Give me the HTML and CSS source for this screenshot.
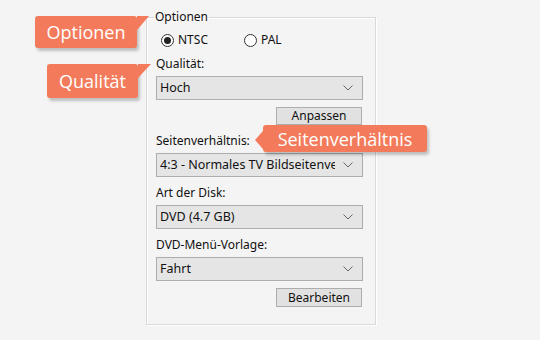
FILE: index.html
```html
<!DOCTYPE html>
<html>
	<head>
		<meta charset="utf-8"/>
		<meta name="viewport" content="width=device-width"/>
		<link rel="stylesheet" href="styles.css">
	</head>
	<body>
		<div class="stage">
			<fieldset class="group">
				<legend>Optionen</legend>
				<div class="radios">
					<div class="radio checked"><span class="dot"></span>NTSC</div>
					<div class="radio"><span class="dot"></span>PAL</div>
				</div>
				<div class="label">Qualität:</div>
				<div class="select"><span class="clip">Hoch</span><svg class="arrow" width="10" height="6" viewBox="0 0 10 6"><polyline points="0.5,0.5 5,5 9.5,0.5"/></svg></div>
				<div class="btnrow"><div class="btn">Anpassen</div></div>
				<div class="label">Seitenverhältnis:</div>
				<div class="select"><span class="clip">4:3 - Normales TV Bildseitenverhältnis</span><svg class="arrow" width="10" height="6" viewBox="0 0 10 6"><polyline points="0.5,0.5 5,5 9.5,0.5"/></svg></div>
				<div class="label">Art der Disk:</div>
				<div class="select"><span class="clip">DVD (4.7 GB)</span><svg class="arrow" width="10" height="6" viewBox="0 0 10 6"><polyline points="0.5,0.5 5,5 9.5,0.5"/></svg></div>
				<div class="label">DVD-Menü-Vorlage:</div>
				<div class="select"><span class="clip">Fahrt</span><svg class="arrow" width="10" height="6" viewBox="0 0 10 6"><polyline points="0.5,0.5 5,5 9.5,0.5"/></svg></div>
				<div class="btnrow"><div class="btn tall">Bearbeiten</div></div>
			</fieldset>

			<div class="tip tip-opt">Optionen</div>
			<div class="tip tip-qual">Qualität</div>
			<div class="tip tip-ratio">Seitenverhältnis</div>
		</div>
	</body>
</html>
```

FILE: styles.css
```css
body{
	margin:0;
	background-color:#f4f4f4;
	font-family:"Noto Sans","Open Sans",sans-serif;
	font-size:12px;
	color:#111;
}
.stage{
	position:relative;
	width:540px;
	height:340px;
	overflow:hidden;
}

/* group box */
.group{
	box-sizing:border-box;
	width:230px;
	min-width:0;
	margin:9px 0 0 146px;
	padding:0 12px 17px 9px;
	border:1px solid #d9d9d9;
	box-shadow:inset 1px 1px 0 #fff, 1px 1px 0 #fff;
	display:flex;
	flex-direction:column;
}
.group legend{
	padding:0 1px;
	margin-left:-2px;
	line-height:16px;
}
.radios{
	display:flex;
	margin-top:7px;
	height:16px;
	align-items:center;
}
.radio{
	display:flex;
	align-items:center;
	width:78px;
	line-height:16px;
	margin-left:5px;
}
.radio .dot{
	width:11px;
	height:11px;
	border:1px solid #333;
	border-radius:50%;
	background:#fff;
	margin-right:4px;
	display:flex;
	align-items:center;
	justify-content:center;
}
.radio.checked .dot:before{
	content:"";
	width:7px;
	height:7px;
	border-radius:50%;
	background:#222;
}

.label{
	line-height:16px;
	margin-top:8px;
	margin-bottom:4px;
}
.select{
	height:22px;
	border:1px solid #adadad;
	background:#e5e5e5;
	display:flex;
	align-items:center;
	padding:0 9px 0 3px;
	line-height:22px;
	font-size:12.5px;
}
.select .clip{
	flex:1;
	min-width:0;
	overflow:hidden;
	white-space:nowrap;
	margin-right:8px;
}
.select .arrow{
	flex:none;
	fill:none;
	stroke:#666;
	stroke-width:1;
}
.btnrow{
	display:flex;
	justify-content:flex-end;
	margin-top:7px;
	padding-right:1px;
}
.btn{
	width:84px;
	height:16px;
	line-height:16px;
	border:1px solid #adadad;
	background:#e1e1e1;
	text-align:center;
}
.btn.tall{
	height:17px;
	line-height:17px;
}

/* callouts */
.tip{
	position:absolute;
	background:#f37b5b;
	color:#fff;
	font-family:"Open Sans","Noto Sans",sans-serif;
	font-size:18px;
	border-radius:3px;
	box-shadow:2px 3px 3px rgba(0,0,0,0.22);
	display:flex;
	align-items:center;
	justify-content:center;
}
.tip:after{
	content:"";
	position:absolute;
	width:0;
	height:0;
}
.tip-opt{
	left:35px;
	top:16px;
	width:102px;
	height:32px;
}
.tip-opt:after{
	right:-12px;
	top:0;
	border-top:14px solid #f37b5b;
	border-right:12px solid transparent;
}
.tip-qual{
	left:47px;
	top:64px;
	width:91px;
	height:34px;
}
.tip-qual:after{
	right:-13px;
	top:0;
	border-top:14px solid #f37b5b;
	border-right:13px solid transparent;
}
.tip-ratio{
	left:263px;
	top:125px;
	width:164px;
	height:27px;
}
.tip-ratio:after{
	left:-8px;
	top:6px;
	border-top:9px solid transparent;
	border-bottom:9px solid transparent;
	border-right:8px solid #f37b5b;
}
```
